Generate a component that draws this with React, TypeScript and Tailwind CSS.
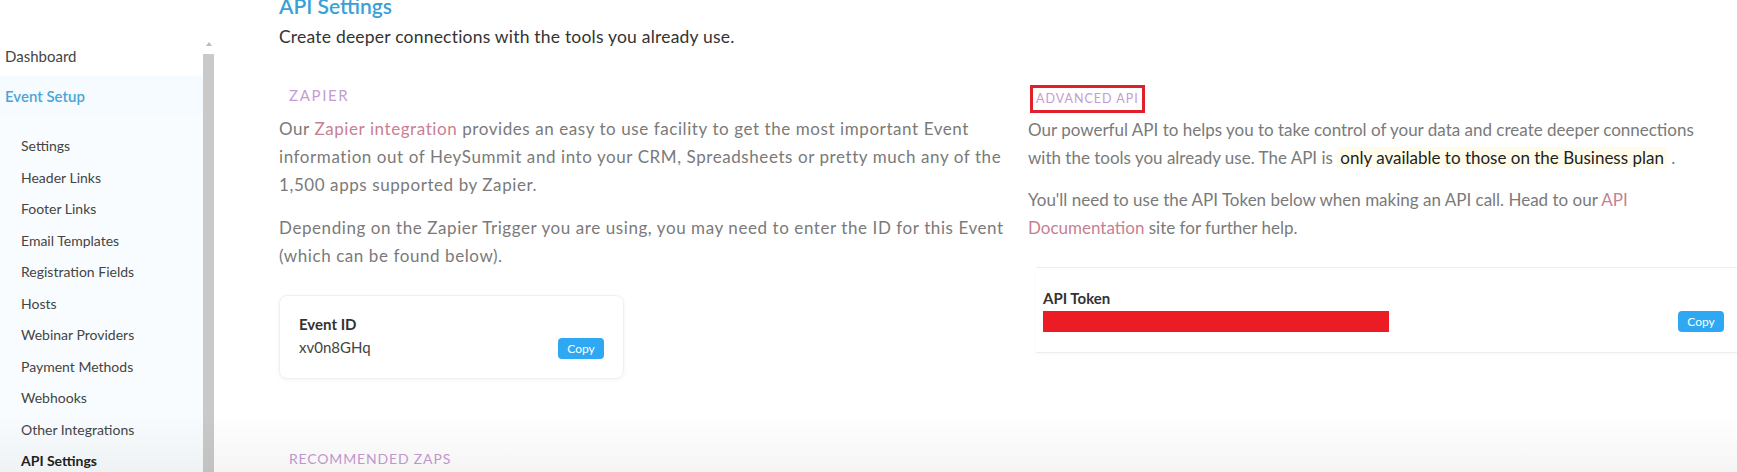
import React from 'react';

const subNav = [
  'Settings',
  'Header Links',
  'Footer Links',
  'Email Templates',
  'Registration Fields',
  'Hosts',
  'Webinar Providers',
  'Payment Methods',
  'Webhooks',
  'Other Integrations',
  'API Settings',
];

function CopyButton() {
  return (
    <button className="h-[21px] w-[46px] rounded-[4px] bg-[#2ea8f2] text-[12px] leading-none text-white">
      Copy
    </button>
  );
}

export default function App() {
  return (
    <div
      className="relative flex h-[472px] w-full overflow-hidden bg-white text-[#7a7a7a]"
      style={{ fontFamily: 'Lato, "Open Sans", sans-serif' }}
    >
      {/* SIDEBAR */}
      <aside className="flex w-[214px] shrink-0 overflow-hidden">
        <div className="flex w-[203px] flex-col pt-[45px]">
          <div className="flex h-[22px] shrink-0 items-center pl-[5px] text-[15px] text-[#444]">Dashboard</div>
          <div className="mt-[9px] flex h-[40px] shrink-0 items-center bg-[#f5fbfe] pl-[5px] text-[15px] font-semibold text-[#49a6d6]">
            Event Setup
          </div>
          <div className="flex flex-1 flex-col bg-[#f9fcfe] pt-[14px]">
            {subNav.map((n) => (
              <div
                key={n}
                className={`flex h-[31.5px] shrink-0 items-center pl-[21px] text-[14px] ${
                  n === 'API Settings' ? 'font-bold text-[#222]' : 'text-[#444]'
                }`}
              >
                {n}
              </div>
            ))}
          </div>
        </div>
        <div className="flex w-[11px] flex-col items-center">
          <div className="mt-[42px] h-0 w-0 border-x-[3px] border-b-[4px] border-x-transparent border-b-[#bbb]" />
          <div className="mt-[8px] w-full flex-1 bg-[#c9c9c9]" />
        </div>
      </aside>

      {/* MAIN */}
      <main className="flex-1 pl-[65px]">
        <h1 className="mt-[-7px] text-[21px] font-semibold leading-[26px] text-[#3b9fd8]">API Settings</h1>
        <p className="mt-[6px] text-[17.5px] leading-[24px] tracking-[0.012em] text-[#333]">
          Create deeper connections with the tools you already use.
        </p>

        <div className="mt-[36px] flex gap-[53px]">
          {/* ZAPIER */}
          <section className="w-[696px] shrink-0">
            <h2 className="ml-[10px] text-[15px] uppercase leading-[20px] tracking-[0.11em] text-[#c59bd2]">Zapier</h2>
            <p className="mt-[10px] whitespace-nowrap text-[17px] leading-[28px] tracking-[0.034em]">
              Our <span className="text-[#c77f92]">Zapier integration</span> provides an easy to use facility to get the
              most important Event
              <br />
              information out of HeySummit and into your CRM, Spreadsheets or pretty much any of the
              <br />
              1,500 apps supported by Zapier.
            </p>
            <p className="mt-[15px] whitespace-nowrap text-[17px] leading-[28px] tracking-[0.034em]">
              Depending on the Zapier Trigger you are using, you may need to enter the ID for this Event
              <br />
              (which can be found below).
            </p>

            <div className="mt-[25px] flex h-[84px] w-[345px] items-end justify-between rounded-[8px] border border-[#f0f0f0] px-[19px] pb-[19px] shadow-[0_1px_4px_rgba(0,0,0,0.05)]">
              <div>
                <div className="text-[15px] font-bold leading-[22px] text-[#333]">Event ID</div>
                <div className="text-[15px] leading-[24px] text-[#444]">xv0n8GHq</div>
              </div>
              <CopyButton />
            </div>

            <h2 className="ml-[10px] mt-[70px] text-[14px] uppercase leading-[20px] tracking-[0.06em] text-[#c59bd2]">
              Recommended Zaps
            </h2>
          </section>

          {/* ADVANCED API */}
          <section className="flex-1">
            <div className="ml-[2px] inline-block border-[3px] border-[#e0202a] px-[3px] py-[1px]">
              <h2 className="text-[12.5px] uppercase leading-[20px] tracking-[0.08em] text-[#c59bd2]">Advanced API</h2>
            </div>
            <p className="mt-[3px] whitespace-nowrap text-[17px] leading-[28px]">
              Our powerful API to helps you to take control of your data and create deeper connections
              <br />
              with the tools you already use. The API is{' '}
              <span className="bg-[#fffcec] px-[3px] text-[#222]">only available to those on the Business plan</span> .
            </p>
            <p className="mt-[14px] whitespace-nowrap text-[17px] leading-[28px]">
              You'll need to use the API Token below when making an API call. Head to our{' '}
              <span className="text-[#c77f92]">API</span>
              <br />
              <span className="text-[#c77f92]">Documentation</span> site for further help.
            </p>

            <div className="ml-[8px] mt-[25px] flex h-[86px] items-end justify-between border-y border-[#eee] pb-[20px] pl-[7px] pr-[13px] shadow-[0_1px_3px_rgba(0,0,0,0.03)]">
              <div>
                <div className="text-[15px] font-bold leading-[22px] text-[#333]">API Token</div>
                <div className="mt-[2px] h-[21px] w-[346px] bg-[#ec1c24]" />
              </div>
              <CopyButton />
            </div>
          </section>
        </div>
      </main>

      {/* video shade at the bottom */}
      <div className="pointer-events-none absolute inset-x-0 bottom-0 h-[60px] bg-gradient-to-b from-transparent to-black/[0.04]" />
    </div>
  );
}
